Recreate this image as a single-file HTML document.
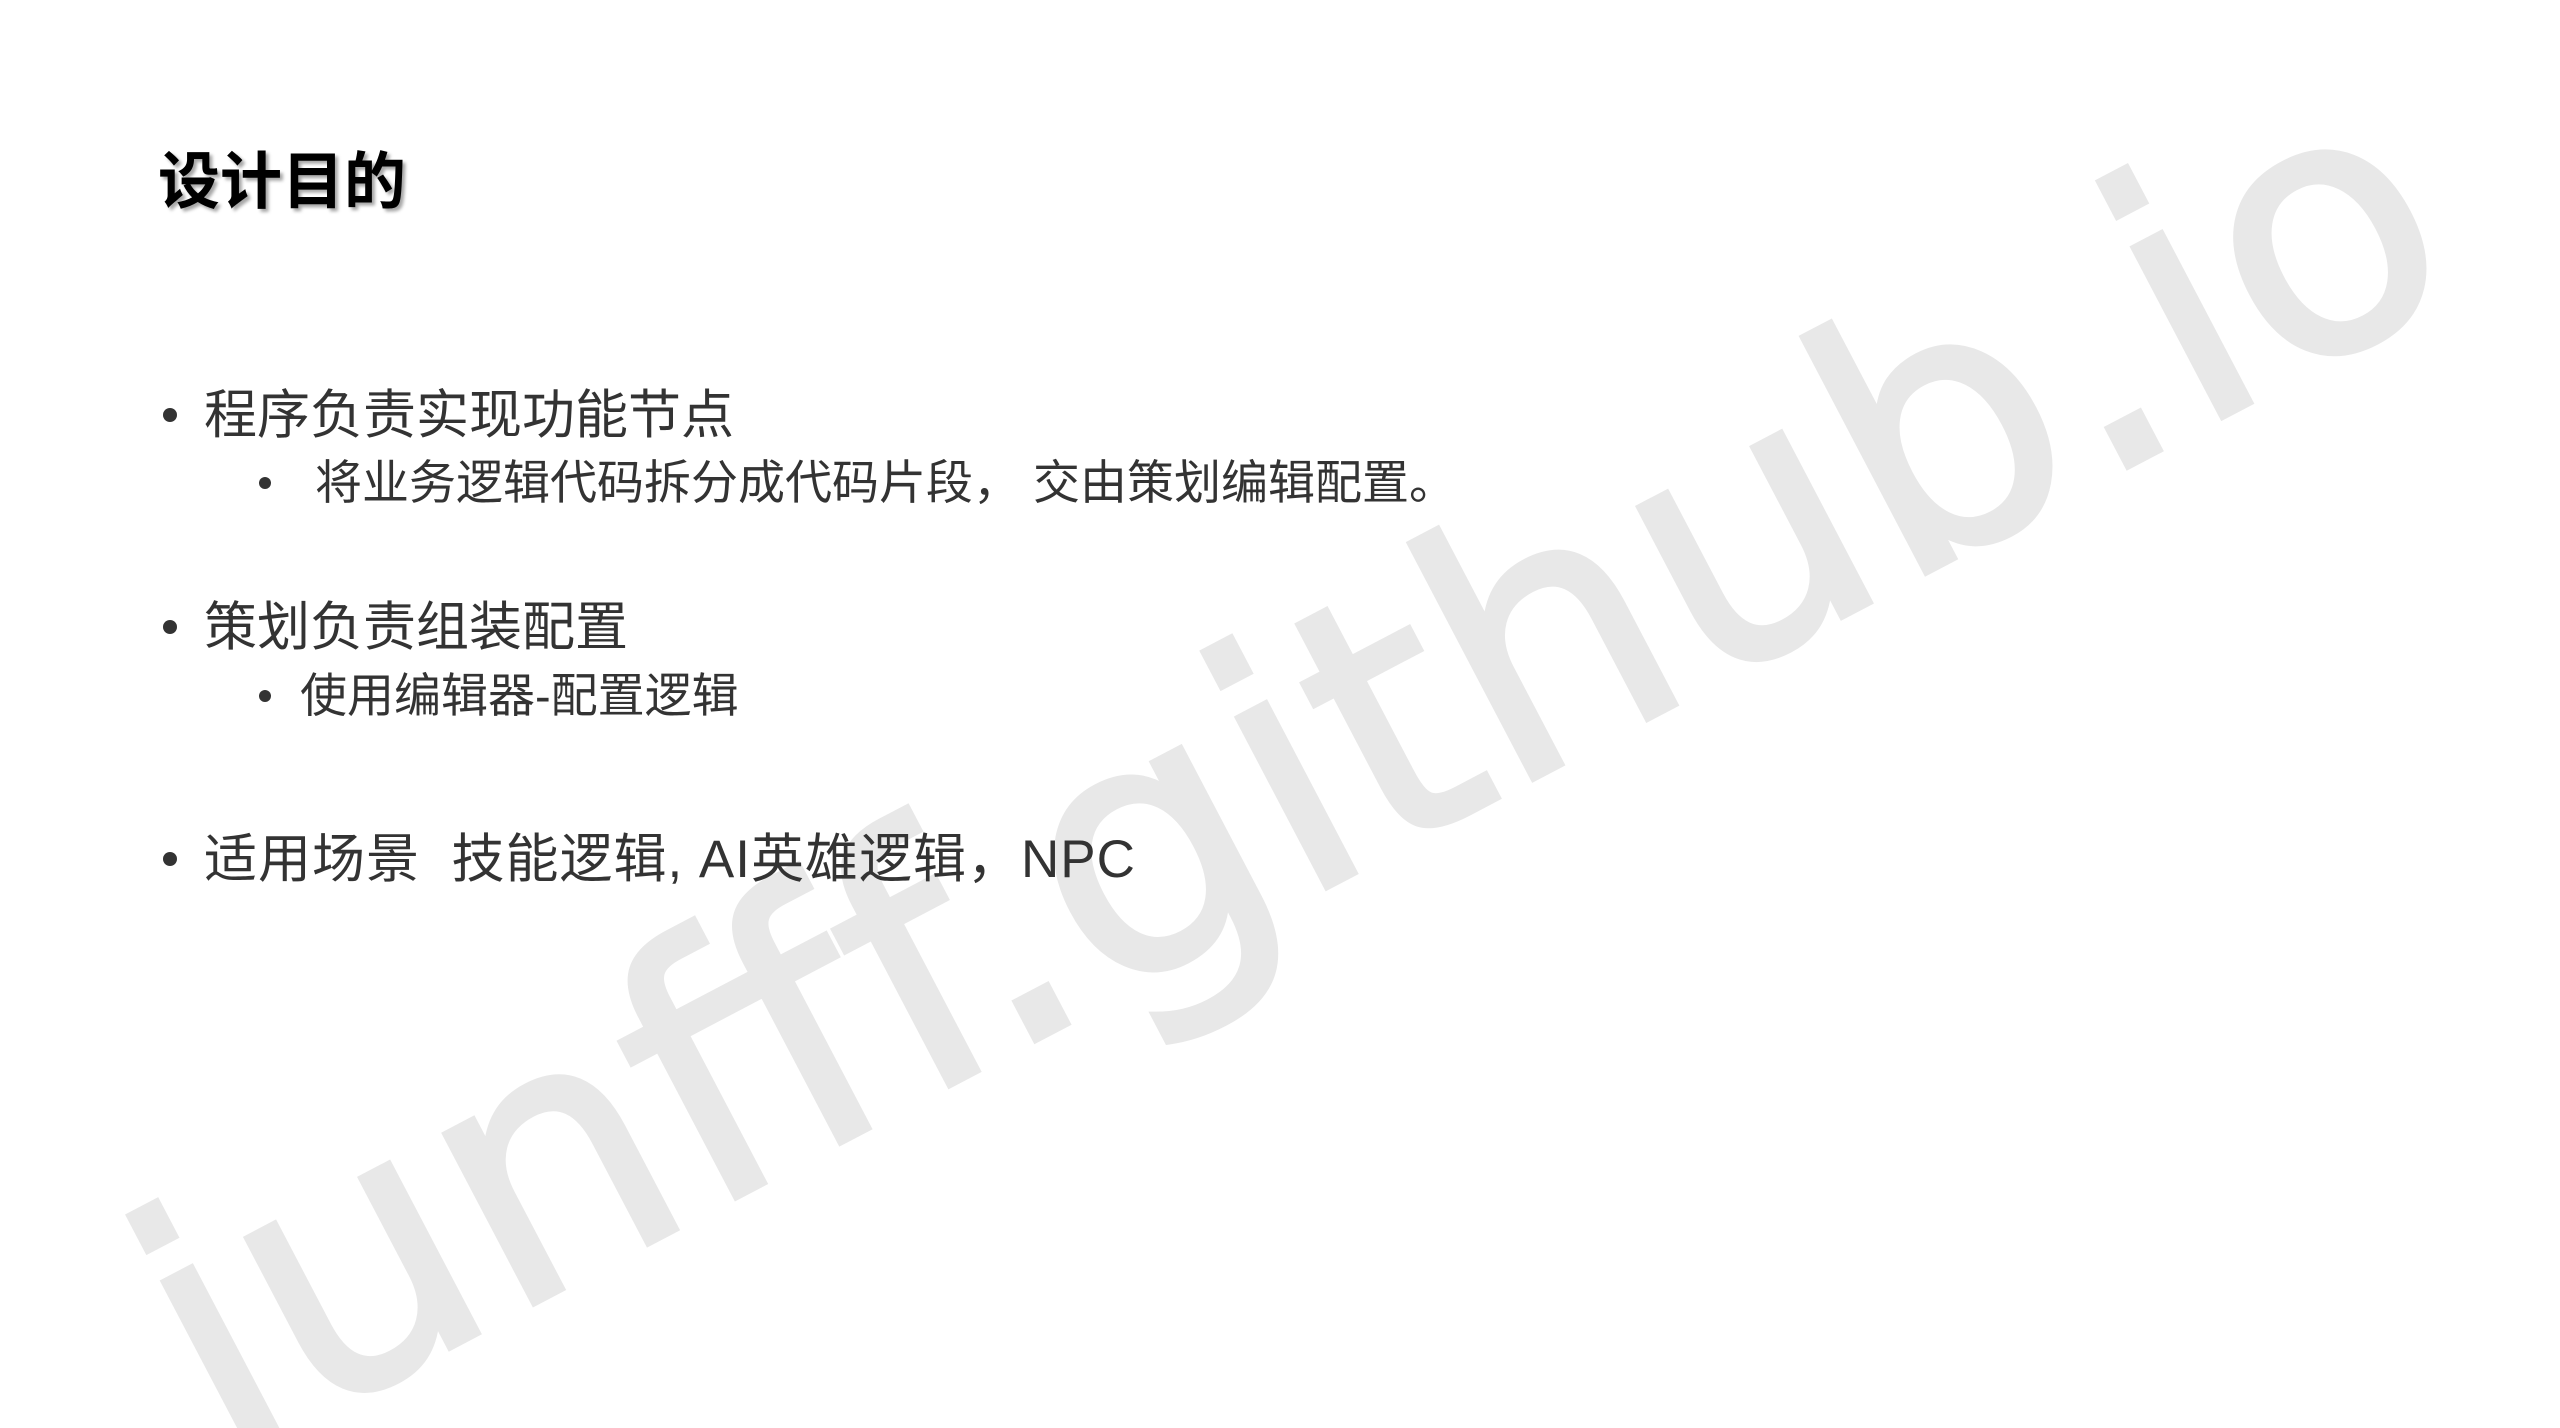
<!DOCTYPE html>
<html><head><meta charset="utf-8"><style>
html,body{margin:0;padding:0;background:#fff;width:2560px;height:1428px;overflow:hidden;position:relative}
.wmbox{position:absolute;left:0;top:0;width:2560px;height:1428px;overflow:hidden}
.wm{position:absolute;left:1290px;top:770px;transform:translate(-50%,-50%) rotate(-27.7deg);font-family:"DejaVu Sans","Liberation Sans",sans-serif;font-size:350px;color:#e8e8e8;white-space:nowrap;line-height:1;-webkit-text-stroke:6px #e8e8e8}
.t{position:absolute;font-family:"Liberation Sans","Noto Sans CJK SC",sans-serif;color:#333;white-space:nowrap;line-height:1}
.title{left:158px;top:152px;font-size:62px;font-weight:bold;color:#000;text-shadow:3px 3px 3px rgba(0,0,0,.35)}
.l1{font-size:53px}
.l2{font-size:47px}
.dot{position:absolute;border-radius:50%;background:#333}
</style></head><body>
<div class="wmbox"><div class="wm">junfff.github.io</div></div>
<div class="t title">设计目的</div>
<div class="dot" style="left:163px;top:408px;width:14px;height:14px"></div>
<div class="t l1" style="left:204px;top:389px">程序负责实现功能节点</div>
<div class="dot" style="left:259px;top:477px;width:12px;height:12px"></div>
<div class="t l2" style="left:315px;top:459px">将业务逻辑代码拆分成代码片段，&nbsp;交由策划编辑配置。</div>
<div class="dot" style="left:163px;top:620px;width:14px;height:14px"></div>
<div class="t l1" style="left:204px;top:601px">策划负责组装配置</div>
<div class="dot" style="left:259px;top:690px;width:12px;height:12px"></div>
<div class="t l2" style="left:300px;top:672px">使用编辑器-配置逻辑</div>
<div class="dot" style="left:163px;top:852px;width:14px;height:14px"></div>
<div class="t l1" style="left:204px;top:833px;letter-spacing:1px">适用场景&nbsp;&nbsp;技能逻辑, AI英雄逻辑，NPC</div>
</body></html>
